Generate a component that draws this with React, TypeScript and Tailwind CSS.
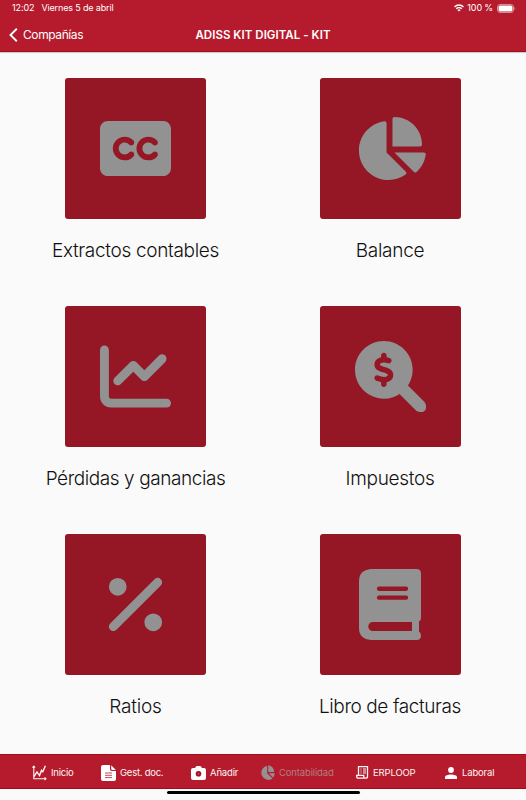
import type { ReactNode } from "react";
import {
  FaChartLine,
  FaChartPie,
  FaClosedCaptioning,
  FaMagnifyingGlassDollar,
  FaPercent,
} from "react-icons/fa6";

// Magnifier with a dollar sign and a thick handle.
function SearchDollar() {
  return (
    <svg width="71" height="71" viewBox="0 0 71 71">
      <FaMagnifyingGlassDollar size={71} />
      <path d="m46.5 46.5 18.5 18.5" stroke="currentColor" strokeWidth="12" strokeLinecap="round" />
    </svg>
  );
}

function Book() {
  return (
    <svg width="62" height="71" viewBox="0 0 62 71" fill="currentColor">
      <path
        fillRule="evenodd"
        d="M12 0h45.5Q62 0 62 4.5V49.5Q62 51 60 52.5V62.5Q62 64 62 66.5 62 71 57.5 71H12Q0 70 0 59V12Q0 1 12 0zM20 17.6a2.1 2.1 0 0 0 0 4.3h27a2.1 2.1 0 0 0 0-4.3zM20 26.5a2.1 2.1 0 0 0 0 4.3h27a2.1 2.1 0 0 0 0-4.3zM13.8 53a4.5 4.5 0 0 0 0 9H53v-9z"
      />
    </svg>
  );
}

type Tile = { label: string; icon: ReactNode; text: string };

const tiles: Tile[] = [
  { label: "Extractos contables", icon: <FaClosedCaptioning size={71} />, text: "tracking-[-0.32px]" },
  { label: "Balance", icon: <FaChartPie size={71} />, text: "tracking-[-0.3px]" },
  { label: "Pérdidas y ganancias", icon: <FaChartLine size={71} />, text: "tracking-[-0.42px]" },
  { label: "Impuestos", icon: <SearchDollar />, text: "tracking-[-0.3px]" },
  { label: "Ratios", icon: <FaPercent size={71} />, text: "tracking-[-0.2px]" },
  { label: "Libro de facturas", icon: <Book />, text: "tracking-[-0.4px]" },
];

function StatusBar() {
  return (
    <div className="flex h-4 items-center pl-3 pr-[10px] text-[9px] leading-4">
      <span className="tracking-[-0.1px]">12:02</span>
      <span className="ml-[7px] tracking-[-0.15px]">Viernes 5 de abril</span>
      <span className="grow" />
      <svg width="10" height="8" viewBox="0 0 10 8" fill="none" stroke="currentColor" strokeWidth="1.4">
        <path d="M.5 2.9a6.4 6.4 0 0 1 9 0M2.2 4.8a4 4 0 0 1 5.6 0" />
        <path d="M5 7.6 3.4 6a2.3 2.3 0 0 1 3.2 0z" fill="currentColor" stroke="none" />
      </svg>
      <span className="ml-[3px] tracking-[-0.15px]">100 %</span>
      <svg className="ml-[4px]" width="19" height="9" viewBox="0 0 19 9">
        <rect x=".5" y=".5" width="16" height="8" rx="2.4" fill="none" stroke="#d98a93" />
        <rect x="1.5" y="1.5" width="14" height="6" rx="1.5" fill="white" />
        <path d="M17.5 3v3c1-.4 1-2.6 0-3z" fill="#d98a93" />
      </svg>
    </div>
  );
}

function Tab({ children, label, className }: { children: ReactNode; label: string; className: string }) {
  return (
    <div className={`flex items-center whitespace-nowrap ${className}`}>
      {children}
      <span className="leading-4">{label}</span>
    </div>
  );
}

export default function App() {
  return (
    <div className="flex h-[800px] w-[526px] flex-col overflow-hidden bg-[#fafafa] font-['Inter',sans-serif] text-[#111]">
      <header className="h-[52px] shrink-0 border-b border-[#a60b17] bg-[#b51b2c] text-white shadow-[0_1px_1px_rgba(0,0,0,0.18)]">
        <StatusBar />
        <div className="grid h-[37px] grid-cols-[1fr_auto_1fr] items-center">
          <div className="flex items-center pl-[9px] text-[12px] tracking-[-0.4px]">
            <svg className="mr-[5px]" width="9" height="14" viewBox="0 0 9 14" fill="none" stroke="white" strokeWidth="1.9">
              <path d="M7.8.8 1.5 7l6.3 6.2" />
            </svg>
            Compañías
          </div>
          <h1 className="pt-[2px] text-[11.5px] font-semibold tracking-[0.04px]">ADISS KIT DIGITAL - KIT</h1>
        </div>
      </header>

      <main className="grid h-[702px] shrink-0 auto-rows-[228px] grid-cols-[255px_254px] pl-[8px] pt-[26px]">
        {tiles.map(({ label, icon, text }) => (
          <section key={label} className="flex flex-col items-center">
            <div className="flex size-[141px] items-center justify-center rounded-[3px] bg-[#951625] text-[#929292]">
              {icon}
            </div>
            <h2 className={`mt-[18px] whitespace-nowrap text-[19px] font-[350] leading-7 ${text}`}>{label}</h2>
          </section>
        ))}
      </main>

      <nav className="flex h-[35px] shrink-0 items-center border-y border-[#a60b17] bg-[#b51b2c] pl-8 pt-[2px] text-[9.5px] tracking-[-0.15px] text-[#fff5f5]">
        <Tab label="Inicio" className="w-[69px] gap-1 tracking-[-0.25px]">
          <svg width="15" height="16" viewBox="0 0 15 16" fill="none" stroke="currentColor" strokeWidth="1.1">
            <path d="M1.8 1v12.8H14M.5 2.6 1.8 1l1.3 1.6M12.5 12.4l1.5 1.4-1.5 1.4" />
            <path d="m2 11.5 3-4.6 2.5 3.7 2-5.2 1.3 1.4 2.6-6" strokeWidth="1.4" />
          </svg>
        </Tab>
        <Tab label="Gest. doc." className="w-[90px] gap-1 tracking-[-0.25px]">
          <svg width="15" height="16" viewBox="0 0 15 16">
            <path d="M2 0h7v4.2Q9 6 10.8 6H15v8q0 2-2 2H2q-2 0-2-2V2q0-2 2-2z" fill="white" />
            <path d="M10.2.3 14.8 5h-3.4q-1.2 0-1.2-1.2z" fill="white" />
            <path d="M4 8h7M4 10.3h7M4 12.6h7" stroke="#c64b5a" strokeWidth="1" />
          </svg>
        </Tab>
        <Tab label="Añadir" className="w-[70px] gap-1">
          <svg width="15" height="14" viewBox="0 0 15 14">
            <path fill="white" d="M2 2h2l1-1.5Q5.4 0 6 0h3q.7 0 1 .5L11 2h2q2 0 2 2v8q0 2-2 2H2q-2 0-2-2V4q0-2 2-2z" />
            <circle cx="7.5" cy="7.8" r="2.8" fill="#a80d20" />
            <circle cx="7.5" cy="7.8" r="1" fill="#c4505d" />
          </svg>
        </Tab>
        <Tab label="Contabilidad" className="w-[95px] gap-1 text-[#b27e83]">
          <svg width="14" height="16" viewBox="0 0 14 16" fill="#959092">
            <path d="M6.2.8v7.4l5.3 5.4A7.1 7.1 0 1 1 6.2.8z" />
            <path d="M7.3.2A7.4 7.4 0 0 1 13.2 7H7.3zM8 8.2h5.7q-.1 2.7-1.7 4.4z" />
          </svg>
        </Tab>
        <Tab label="ERPLOOP" className="w-[88px] gap-1">
          <svg width="13" height="13" viewBox="0 0 13 13" fill="none" stroke="currentColor">
            <path d="M2.5 9V.7h9v9.5q0 2-1.8 2H2Q.7 12.2.7 10V9.4h7.1V11q0 1.2 1.6 1.2" strokeWidth="1.3" />
            <path d="M4.5 3h1M7 3h3M4.5 5h1M7 5h3M4.5 7h1M7 7h3" />
          </svg>
        </Tab>
        <Tab label="Laboral" className="gap-[5px]">
          <svg className="ml-px" width="12" height="12" viewBox="0 0 12 12" fill="white">
            <circle cx="6" cy="3" r="2.9" />
            <path d="M0 12v-1.7C0 6.6 12 6.6 12 10.3V12z" />
          </svg>
        </Tab>
      </nav>
      <div className="flex h-[11px] justify-center pt-[2px]">
        <div className="h-[3px] w-[193px] rounded-full bg-black" />
      </div>
    </div>
  );
}
